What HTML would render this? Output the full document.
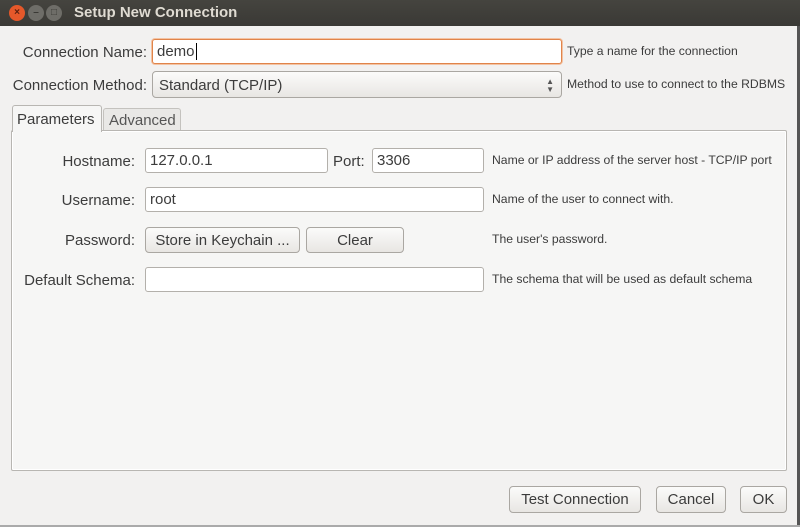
<!DOCTYPE html>
<html><head><meta charset="utf-8"><style>
*{box-sizing:border-box;margin:0;padding:0}
body{width:800px;height:527px;overflow:hidden;background:#f2f1f0;font-family:"Liberation Sans","DejaVu Sans",sans-serif;color:#3c3c3c;position:relative}
.a{position:absolute}
.title{left:0;top:0;width:800px;height:26px;background:linear-gradient(#45443f,#3a3935);color:#dfdbd2;font-weight:bold;font-size:15px;line-height:25px;padding-left:74px}
.dot{top:5px;width:16px;height:16px;border-radius:50%;font-size:10px;line-height:16px;text-align:center;color:#3a3935;font-weight:bold}
.lbl{font-size:15px;text-align:right;white-space:nowrap}
.help{font-size:12.2px;color:#3c3c3c;white-space:nowrap}
.inp{background:#fff;border:1px solid #b3b0ab;border-radius:3px;font-size:15px;padding-left:4px;line-height:24px}
.btn{border:1px solid #aaa7a2;border-radius:4px;background:linear-gradient(#fbfbfa,#e8e6e3);font-size:15px;text-align:center;line-height:26px}
</style></head><body>
<div class="a title">Setup New Connection</div>
<div class="a dot" style="left:9px;background:#e5582a;color:#5a2010">×</div>
<div class="a dot" style="left:28px;background:#6e6d68">–</div>
<div class="a dot" style="left:46px;background:#6e6d68">□</div>
<div class="a" style="right:0;top:26px;width:3px;height:501px;background:#555"></div>
<div class="a" style="left:0;bottom:0;width:800px;height:2px;background:#aaa"></div>

<div class="a lbl" style="right:653px;top:44px">Connection Name:</div>
<div class="a inp" style="left:152px;top:39px;width:410px;height:25px;border-color:#e0844a;box-shadow:0 0 0 1px #f3c3a3">demo<span style="border-left:1px solid #000;margin-left:1px"></span></div>
<div class="a help" style="left:567px;top:44px">Type a name for the connection</div>

<div class="a lbl" style="right:653px;top:77px">Connection Method:</div>
<div class="a btn" style="left:152px;top:71px;width:410px;height:27px;text-align:left;padding-left:6px;line-height:27px">Standard (TCP/IP)<span class="a" style="right:7px;font-size:8px;line-height:8px;top:6px;color:#555">▲<br>▼</span></div>
<div class="a help" style="left:567px;top:77px">Method to use to connect to the RDBMS</div>

<div class="a" style="left:11px;top:130px;width:776px;height:341px;background:#f6f6f5;border:1px solid #b8b6b2;border-radius:2px;box-shadow:inset 0 0 0 1px #fff"></div>
<div class="a" style="left:12px;top:105px;width:90px;height:27px;background:#f6f6f5;border:1px solid #b8b6b2;border-bottom:none;border-radius:3px 3px 0 0;font-size:15px;line-height:27px;padding-left:4px">Parameters</div>
<div class="a" style="left:103px;top:108px;width:78px;height:22px;background:#e9e8e6;border:1px solid #c4c2be;border-bottom:none;border-radius:3px 3px 0 0;font-size:15px;line-height:23px;padding-left:5px;color:#555">Advanced</div>

<div class="a lbl" style="right:665px;top:153px">Hostname:</div>
<div class="a inp" style="left:145px;top:148px;width:183px;height:25px">127.0.0.1</div>
<div class="a lbl" style="left:333px;top:153px">Port:</div>
<div class="a inp" style="left:372px;top:148px;width:112px;height:25px">3306</div>
<div class="a help" style="left:492px;top:153px">Name or IP address of the server host - TCP/IP port</div>

<div class="a lbl" style="right:665px;top:192px">Username:</div>
<div class="a inp" style="left:145px;top:187px;width:339px;height:25px">root</div>
<div class="a help" style="left:492px;top:192px">Name of the user to connect with.</div>

<div class="a lbl" style="right:665px;top:232px">Password:</div>
<div class="a btn" style="left:145px;top:227px;width:155px;height:26px">Store in Keychain ...</div>
<div class="a btn" style="left:306px;top:227px;width:98px;height:26px">Clear</div>
<div class="a help" style="left:492px;top:232px">The user's password.</div>

<div class="a lbl" style="right:665px;top:272px">Default Schema:</div>
<div class="a inp" style="left:145px;top:267px;width:339px;height:25px"></div>
<div class="a help" style="left:492px;top:272px">The schema that will be used as default schema</div>

<div class="a btn" style="left:509px;top:486px;width:132px;height:27px">Test Connection</div>
<div class="a btn" style="left:656px;top:486px;width:70px;height:27px">Cancel</div>
<div class="a btn" style="left:740px;top:486px;width:47px;height:27px">OK</div>
</body></html>
